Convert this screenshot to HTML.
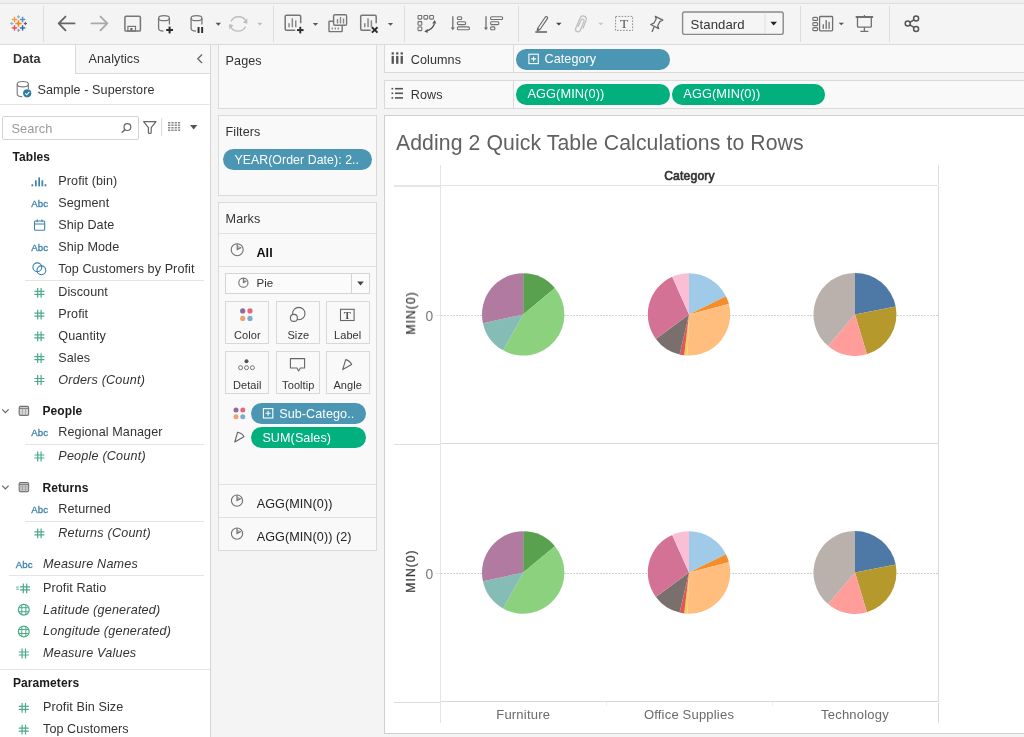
<!DOCTYPE html><html><head><meta charset="utf-8"><style>html,body{margin:0;padding:0;}body{width:1024px;height:737px;position:relative;overflow:hidden;background:#f4f4f4;-webkit-font-smoothing:antialiased;font-family:"Liberation Sans", sans-serif;}#root{position:absolute;left:0;top:0;width:1024px;height:737px;overflow:hidden;will-change:transform;}</style></head><body><div id="root">
<div style="position:absolute;left:0px;top:0px;width:1024px;height:3px;background:#efeef1;"></div>
<div style="position:absolute;left:0px;top:3px;width:1024px;height:1px;background:#dedede;"></div>
<div style="position:absolute;left:0px;top:4px;width:1024px;height:40px;background:#f4f4f4;"></div>
<div style="position:absolute;left:0px;top:44px;width:1024px;height:1px;background:#dcdcdc;"></div>
<div style="position:absolute;left:43px;top:6px;width:1px;height:36px;background:#dcdcdc;"></div>
<div style="position:absolute;left:273px;top:6px;width:1px;height:36px;background:#dcdcdc;"></div>
<div style="position:absolute;left:404px;top:6px;width:1px;height:36px;background:#dcdcdc;"></div>
<div style="position:absolute;left:517.5px;top:6px;width:1px;height:36px;background:#dcdcdc;"></div>
<div style="position:absolute;left:799.5px;top:6px;width:1px;height:36px;background:#dcdcdc;"></div>
<div style="position:absolute;left:888.5px;top:6px;width:1px;height:36px;background:#dcdcdc;"></div>
<div style="position:absolute;left:0px;top:45px;width:210px;height:692px;background:#ffffff;"></div>
<div style="position:absolute;left:210px;top:45px;width:1px;height:692px;background:#d6d6d6;"></div>
<div style="position:absolute;left:75px;top:45px;width:135px;height:29px;background:#f8f8f8;border-left:1px solid #d9d9d9;border-bottom:1px solid #d9d9d9;box-sizing:border-box;"></div>
<div style="position:absolute;top:53.03px;font-size:12.6px;line-height:12.6px;color:#333;font-weight:bold;white-space:nowrap;letter-spacing:0.08px;left:13px;">Data</div>
<div style="position:absolute;top:53.03px;font-size:12.6px;line-height:12.6px;color:#333;font-weight:normal;white-space:nowrap;letter-spacing:0.08px;left:88.5px;">Analytics</div>
<div style="position:absolute;top:83.53px;font-size:12.6px;line-height:12.6px;color:#333;font-weight:normal;white-space:nowrap;letter-spacing:0.08px;left:37.5px;">Sample - Superstore</div>
<div style="position:absolute;left:0px;top:104px;width:210px;height:1px;background:#e4e4e4;"></div>
<div style="position:absolute;left:2px;top:116px;width:137px;height:24px;background:#fff;border:1px solid #d4d4d4;border-radius:2px;box-sizing:border-box;"></div>
<div style="position:absolute;top:122.86px;font-size:12.8px;line-height:12.8px;color:#9a9a9a;font-weight:normal;white-space:nowrap;letter-spacing:0.08px;left:11.5px;">Search</div>
<div style="position:absolute;top:151.24px;font-size:12px;line-height:12px;color:#1a1a1a;font-weight:bold;white-space:nowrap;letter-spacing:0.08px;left:12.5px;">Tables</div>
<div style="position:absolute;top:175.43px;font-size:12.6px;line-height:12.6px;color:#333;font-weight:normal;white-space:nowrap;letter-spacing:0.08px;left:58.3px;">Profit (bin)</div>
<div style="position:absolute;top:197.23px;font-size:12.6px;line-height:12.6px;color:#333;font-weight:normal;white-space:nowrap;letter-spacing:0.08px;left:58.3px;">Segment</div>
<div style="position:absolute;top:219.03px;font-size:12.6px;line-height:12.6px;color:#333;font-weight:normal;white-space:nowrap;letter-spacing:0.08px;left:58.3px;">Ship Date</div>
<div style="position:absolute;top:240.83px;font-size:12.6px;line-height:12.6px;color:#333;font-weight:normal;white-space:nowrap;letter-spacing:0.08px;left:58.3px;">Ship Mode</div>
<div style="position:absolute;top:262.63px;font-size:12.6px;line-height:12.6px;color:#333;font-weight:normal;white-space:nowrap;letter-spacing:0.08px;left:58.3px;">Top Customers by Profit</div>
<div style="position:absolute;top:286.43px;font-size:12.6px;line-height:12.6px;color:#333;font-weight:normal;white-space:nowrap;letter-spacing:0.08px;left:58.3px;">Discount</div>
<div style="position:absolute;top:308.23px;font-size:12.6px;line-height:12.6px;color:#333;font-weight:normal;white-space:nowrap;letter-spacing:0.08px;left:58.3px;">Profit</div>
<div style="position:absolute;top:330.03px;font-size:12.6px;line-height:12.6px;color:#333;font-weight:normal;white-space:nowrap;letter-spacing:0.08px;left:58.3px;">Quantity</div>
<div style="position:absolute;top:351.83px;font-size:12.6px;line-height:12.6px;color:#333;font-weight:normal;white-space:nowrap;letter-spacing:0.08px;left:58.3px;">Sales</div>
<div style="position:absolute;top:373.63px;font-size:12.6px;line-height:12.6px;color:#333;font-weight:normal;white-space:nowrap;font-style:italic;letter-spacing:0.2px;left:58.3px;">Orders (Count)</div>
<div style="position:absolute;left:25px;top:280px;width:179px;height:1px;background:#e4e4e4;"></div>
<div style="position:absolute;top:405.44px;font-size:12px;line-height:12px;color:#1a1a1a;font-weight:bold;white-space:nowrap;letter-spacing:0.08px;left:42.5px;">People</div>
<div style="position:absolute;top:426.33px;font-size:12.6px;line-height:12.6px;color:#333;font-weight:normal;white-space:nowrap;letter-spacing:0.08px;left:58.3px;">Regional Manager</div>
<div style="position:absolute;left:25px;top:444px;width:179px;height:1px;background:#e4e4e4;"></div>
<div style="position:absolute;top:450.13px;font-size:12.6px;line-height:12.6px;color:#333;font-weight:normal;white-space:nowrap;font-style:italic;letter-spacing:0.2px;left:58.3px;">People (Count)</div>
<div style="position:absolute;top:481.84px;font-size:12px;line-height:12px;color:#1a1a1a;font-weight:bold;white-space:nowrap;letter-spacing:0.08px;left:42.5px;">Returns</div>
<div style="position:absolute;top:503.03px;font-size:12.6px;line-height:12.6px;color:#333;font-weight:normal;white-space:nowrap;letter-spacing:0.08px;left:58.3px;">Returned</div>
<div style="position:absolute;left:25px;top:520.5px;width:179px;height:1px;background:#e4e4e4;"></div>
<div style="position:absolute;top:526.93px;font-size:12.6px;line-height:12.6px;color:#333;font-weight:normal;white-space:nowrap;font-style:italic;letter-spacing:0.2px;left:58.3px;">Returns (Count)</div>
<div style="position:absolute;top:557.83px;font-size:12.6px;line-height:12.6px;color:#333;font-weight:normal;white-space:nowrap;font-style:italic;letter-spacing:0.2px;left:43px;">Measure Names</div>
<div style="position:absolute;left:9px;top:575px;width:195px;height:1px;background:#e4e4e4;"></div>
<div style="position:absolute;top:581.93px;font-size:12.6px;line-height:12.6px;color:#333;font-weight:normal;white-space:nowrap;letter-spacing:0.08px;left:43px;">Profit Ratio</div>
<div style="position:absolute;top:603.53px;font-size:12.6px;line-height:12.6px;color:#333;font-weight:normal;white-space:nowrap;font-style:italic;letter-spacing:0.2px;left:43px;">Latitude (generated)</div>
<div style="position:absolute;top:625.33px;font-size:12.6px;line-height:12.6px;color:#333;font-weight:normal;white-space:nowrap;font-style:italic;letter-spacing:0.2px;left:43px;">Longitude (generated)</div>
<div style="position:absolute;top:647.13px;font-size:12.6px;line-height:12.6px;color:#333;font-weight:normal;white-space:nowrap;font-style:italic;letter-spacing:0.2px;left:43px;">Measure Values</div>
<div style="position:absolute;left:0px;top:669px;width:210px;height:1px;background:#e4e4e4;"></div>
<div style="position:absolute;top:676.84px;font-size:12px;line-height:12px;color:#1a1a1a;font-weight:bold;white-space:nowrap;letter-spacing:0.08px;left:13px;">Parameters</div>
<div style="position:absolute;top:701.43px;font-size:12.6px;line-height:12.6px;color:#333;font-weight:normal;white-space:nowrap;letter-spacing:0.08px;left:43px;">Profit Bin Size</div>
<div style="position:absolute;top:723.23px;font-size:12.6px;line-height:12.6px;color:#333;font-weight:normal;white-space:nowrap;letter-spacing:0.08px;left:43px;">Top Customers</div>
<div style="position:absolute;left:218px;top:44px;width:159px;height:64.5px;background:#f9f9f9;border:1px solid #dadada;box-sizing:border-box;"></div>
<div style="position:absolute;top:55.33px;font-size:12.6px;line-height:12.6px;color:#333;font-weight:normal;white-space:nowrap;letter-spacing:0.08px;left:225.6px;">Pages</div>
<div style="position:absolute;left:218px;top:115px;width:159px;height:80.5px;background:#f9f9f9;border:1px solid #dadada;box-sizing:border-box;"></div>
<div style="position:absolute;top:125.83px;font-size:12.6px;line-height:12.6px;color:#333;font-weight:normal;white-space:nowrap;letter-spacing:0.08px;left:225.6px;">Filters</div>
<div style="position:absolute;left:223px;top:149px;width:149px;height:21px;background:#4a96b3;border-radius:10.5px;"></div>
<div style="position:absolute;top:153.79px;font-size:12.3px;line-height:12.3px;color:#fff;font-weight:normal;white-space:nowrap;letter-spacing:0.08px;left:234.4px;">YEAR(Order Date): 2..</div>
<div style="position:absolute;left:218px;top:202px;width:159px;height:349px;background:#f9f9f9;border:1px solid #dadada;box-sizing:border-box;"></div>
<div style="position:absolute;top:212.83px;font-size:12.6px;line-height:12.6px;color:#333;font-weight:normal;white-space:nowrap;letter-spacing:0.08px;left:225.6px;">Marks</div>
<div style="position:absolute;left:219px;top:233px;width:157px;height:1px;background:#e0e0e0;"></div>
<div style="position:absolute;top:247.03px;font-size:12.6px;line-height:12.6px;color:#111;font-weight:bold;white-space:nowrap;letter-spacing:0.08px;left:256.4px;">All</div>
<div style="position:absolute;left:219px;top:266px;width:157px;height:1px;background:#e0e0e0;"></div>
<div style="position:absolute;left:225px;top:273px;width:145px;height:21px;background:#fbfbfb;border:1px solid #d4d4d4;box-sizing:border-box;"></div>
<div style="position:absolute;left:350.5px;top:274px;width:1px;height:19px;background:#d4d4d4;"></div>
<div style="position:absolute;top:277.77px;font-size:11.5px;line-height:11.5px;color:#333;font-weight:normal;white-space:nowrap;letter-spacing:0.08px;left:256.4px;">Pie</div>
<div style="position:absolute;left:225.3px;top:301px;width:44px;height:43px;background:#f9f9f9;border:1px solid #d8d8d8;box-sizing:border-box;"></div>
<div style="position:absolute;top:330.29px;font-size:11px;line-height:11px;color:#333;font-weight:normal;white-space:nowrap;letter-spacing:0.08px;left:47.30000000000001px;width:400px;text-align:center;">Color</div>
<div style="position:absolute;left:276.3px;top:301px;width:44px;height:43px;background:#f9f9f9;border:1px solid #d8d8d8;box-sizing:border-box;"></div>
<div style="position:absolute;top:330.29px;font-size:11px;line-height:11px;color:#333;font-weight:normal;white-space:nowrap;letter-spacing:0.08px;left:98.30000000000001px;width:400px;text-align:center;">Size</div>
<div style="position:absolute;left:325.7px;top:301px;width:44px;height:43px;background:#f9f9f9;border:1px solid #d8d8d8;box-sizing:border-box;"></div>
<div style="position:absolute;top:330.29px;font-size:11px;line-height:11px;color:#333;font-weight:normal;white-space:nowrap;letter-spacing:0.08px;left:147.7px;width:400px;text-align:center;">Label</div>
<div style="position:absolute;left:225.3px;top:350.5px;width:44px;height:43px;background:#f9f9f9;border:1px solid #d8d8d8;box-sizing:border-box;"></div>
<div style="position:absolute;top:379.89px;font-size:11px;line-height:11px;color:#333;font-weight:normal;white-space:nowrap;letter-spacing:0.08px;left:47.30000000000001px;width:400px;text-align:center;">Detail</div>
<div style="position:absolute;left:276.3px;top:350.5px;width:44px;height:43px;background:#f9f9f9;border:1px solid #d8d8d8;box-sizing:border-box;"></div>
<div style="position:absolute;top:379.89px;font-size:11px;line-height:11px;color:#333;font-weight:normal;white-space:nowrap;letter-spacing:0.08px;left:98.30000000000001px;width:400px;text-align:center;">Tooltip</div>
<div style="position:absolute;left:325.7px;top:350.5px;width:44px;height:43px;background:#f9f9f9;border:1px solid #d8d8d8;box-sizing:border-box;"></div>
<div style="position:absolute;top:379.89px;font-size:11px;line-height:11px;color:#333;font-weight:normal;white-space:nowrap;letter-spacing:0.08px;left:147.7px;width:400px;text-align:center;">Angle</div>
<div style="position:absolute;left:251px;top:403px;width:115px;height:21px;background:#4a96b3;border-radius:10.5px;"></div>
<div style="position:absolute;top:407.83px;font-size:12.6px;line-height:12.6px;color:#fff;font-weight:normal;white-space:nowrap;letter-spacing:0.08px;left:279.2px;">Sub-Catego..</div>
<div style="position:absolute;left:251px;top:427px;width:115px;height:21px;background:#02b07e;border-radius:10.5px;"></div>
<div style="position:absolute;top:431.53px;font-size:12.6px;line-height:12.6px;color:#fff;font-weight:normal;white-space:nowrap;letter-spacing:0.08px;left:262.4px;">SUM(Sales)</div>
<div style="position:absolute;left:219px;top:484px;width:157px;height:1px;background:#e0e0e0;"></div>
<div style="position:absolute;top:498.03px;font-size:12.6px;line-height:12.6px;color:#222;font-weight:normal;white-space:nowrap;letter-spacing:0.08px;left:256.7px;">AGG(MIN(0))</div>
<div style="position:absolute;left:219px;top:517px;width:157px;height:1px;background:#e0e0e0;"></div>
<div style="position:absolute;top:531.23px;font-size:12.6px;line-height:12.6px;color:#222;font-weight:normal;white-space:nowrap;letter-spacing:0.08px;left:256.7px;">AGG(MIN(0)) (2)</div>
<div style="position:absolute;left:384px;top:44px;width:640px;height:29.3px;background:#f9f9f9;border-top:1px solid #dadada;border-bottom:1px solid #dadada;border-left:1px solid #dadada;box-sizing:border-box;"></div>
<div style="position:absolute;left:512.5px;top:45px;width:1px;height:27.3px;background:#dadada;"></div>
<div style="position:absolute;top:53.83px;font-size:12.6px;line-height:12.6px;color:#333;font-weight:normal;white-space:nowrap;letter-spacing:0.08px;left:410.8px;">Columns</div>
<div style="position:absolute;left:384px;top:80px;width:640px;height:29.2px;background:#f9f9f9;border-top:1px solid #dadada;border-bottom:1px solid #dadada;border-left:1px solid #dadada;box-sizing:border-box;"></div>
<div style="position:absolute;left:512.5px;top:81px;width:1px;height:27.2px;background:#dadada;"></div>
<div style="position:absolute;top:88.53px;font-size:12.6px;line-height:12.6px;color:#333;font-weight:normal;white-space:nowrap;letter-spacing:0.08px;left:410.8px;">Rows</div>
<div style="position:absolute;left:516px;top:49px;width:153.5px;height:20.5px;background:#4a96b3;border-radius:10.25px;"></div>
<div style="position:absolute;top:52.63px;font-size:12.6px;line-height:12.6px;color:#fff;font-weight:normal;white-space:nowrap;letter-spacing:0.08px;left:544.5px;">Category</div>
<div style="position:absolute;left:516px;top:84.2px;width:153.5px;height:20.5px;background:#02b07e;border-radius:10.25px;"></div>
<div style="position:absolute;top:87.86px;font-size:12.8px;line-height:12.8px;color:#fff;font-weight:normal;white-space:nowrap;letter-spacing:0.08px;left:527.4px;">AGG(MIN(0))</div>
<div style="position:absolute;left:672px;top:84.2px;width:153px;height:20.5px;background:#02b07e;border-radius:10.25px;"></div>
<div style="position:absolute;top:87.86px;font-size:12.8px;line-height:12.8px;color:#fff;font-weight:normal;white-space:nowrap;letter-spacing:0.08px;left:683.3px;">AGG(MIN(0))</div>
<div style="position:absolute;left:384px;top:115px;width:640px;height:619px;background:#ffffff;border-left:1.5px solid #cfcfcf;border-top:1.5px solid #cfcfcf;border-bottom:1.5px solid #cfcfcf;box-sizing:border-box;"></div>
<div style="position:absolute;top:132.05px;font-size:21.2px;line-height:21.2px;color:#606060;font-weight:normal;white-space:nowrap;letter-spacing:0.08px;left:396px;letter-spacing:0.1px;">Adding 2 Quick Table Calculations to Rows</div>
<div style="position:absolute;left:440px;top:165px;width:1px;height:558px;background:#e4e4e4;"></div>
<div style="position:absolute;left:394px;top:185px;width:46px;height:2px;background:#e6e6e6;"></div>
<div style="position:absolute;left:441px;top:185px;width:497px;height:1px;background:#e4e4e4;"></div>
<div style="position:absolute;left:938px;top:165px;width:1px;height:20px;background:#dcdcdc;"></div>
<div style="position:absolute;left:937.6px;top:186px;width:1px;height:516px;background:#dadada;"></div>
<div style="position:absolute;left:938px;top:703px;width:1px;height:20px;background:#d8d8d8;"></div>
<div style="position:absolute;left:394px;top:444px;width:46px;height:1px;background:#dedede;"></div>
<div style="position:absolute;left:441px;top:443px;width:497px;height:1px;background:#dadada;"></div>
<div style="position:absolute;left:394px;top:702px;width:46px;height:1px;background:#dedede;"></div>
<div style="position:absolute;left:441px;top:701px;width:497px;height:1px;background:#d8d8d8;"></div>
<div style="position:absolute;left:606px;top:702px;width:1px;height:4px;background:#ececec;"></div>
<div style="position:absolute;left:772px;top:702px;width:1px;height:4px;background:#ececec;"></div>
<div style="position:absolute;top:170.37px;font-size:12.2px;line-height:12.2px;color:#333;font-weight:normal;white-space:nowrap;letter-spacing:0.08px;left:489.5px;width:400px;text-align:center;-webkit-text-stroke:0.6px #2e2e2e;letter-spacing:0.15px;">Category</div>
<div style="position:absolute;top:708.10px;font-size:13px;line-height:13px;color:#6a6a6a;font-weight:normal;white-space:nowrap;letter-spacing:0.08px;left:323.20000000000005px;width:400px;text-align:center;letter-spacing:0.2px;">Furniture</div>
<div style="position:absolute;top:708.10px;font-size:13px;line-height:13px;color:#6a6a6a;font-weight:normal;white-space:nowrap;letter-spacing:0.08px;left:489px;width:400px;text-align:center;letter-spacing:0.2px;">Office Supplies</div>
<div style="position:absolute;top:708.10px;font-size:13px;line-height:13px;color:#6a6a6a;font-weight:normal;white-space:nowrap;letter-spacing:0.08px;left:655px;width:400px;text-align:center;letter-spacing:0.2px;">Technology</div>
<div style="position:absolute;left:441px;top:315px;width:497px;height:1px;background:repeating-linear-gradient(to right,#d0d0d0 0,#d0d0d0 2px,transparent 2px,transparent 3px);"></div>
<div style="position:absolute;left:435px;top:315px;width:5px;height:1px;background:#ececec;"></div>
<div style="position:absolute;top:309.62px;font-size:13.8px;line-height:13.8px;color:#7a7a7a;font-weight:normal;white-space:nowrap;letter-spacing:0.08px;left:229.5px;width:400px;text-align:center;">0</div>
<div style="position:absolute;left:410.8px;top:313.1px;transform:translate(-50%,-50%) rotate(-90deg);font-size:12.2px;line-height:12px;color:#3a3a3a;font-weight:normal;-webkit-text-stroke:0.25px #3a3a3a;letter-spacing:1px;white-space:nowrap;">MIN(0)</div>
<div style="position:absolute;left:441px;top:573px;width:497px;height:1px;background:repeating-linear-gradient(to right,#d0d0d0 0,#d0d0d0 2px,transparent 2px,transparent 3px);"></div>
<div style="position:absolute;left:435px;top:573px;width:5px;height:1px;background:#ececec;"></div>
<div style="position:absolute;top:567.62px;font-size:13.8px;line-height:13.8px;color:#7a7a7a;font-weight:normal;white-space:nowrap;letter-spacing:0.08px;left:229.5px;width:400px;text-align:center;">0</div>
<div style="position:absolute;left:410.8px;top:571.1px;transform:translate(-50%,-50%) rotate(-90deg);font-size:12.2px;line-height:12px;color:#3a3a3a;font-weight:normal;-webkit-text-stroke:0.25px #3a3a3a;letter-spacing:1px;white-space:nowrap;">MIN(0)</div>
<svg style="position:absolute;left:0px;top:0px;pointer-events:none;" width="1024" height="737" viewBox="0 0 1024 737"><path d="M523.20,314.40 L523.20,273.20 A41.2,41.2 0 0 1 554.90,288.08 Z" fill="#59a14f"/><path d="M523.20,314.40 L554.90,288.08 A41.2,41.2 0 0 1 503.10,350.36 Z" fill="#8cd17d"/><path d="M523.20,314.40 L503.10,350.36 A41.2,41.2 0 0 1 482.95,323.18 Z" fill="#86bcb6"/><path d="M523.20,314.40 L482.95,323.18 A41.2,41.2 0 0 1 523.20,273.20 Z" fill="#b07aa1"/><path d="M689.00,314.40 L689.00,273.20 A41.2,41.2 0 0 1 725.94,296.15 Z" fill="#a0cbe8"/><path d="M689.00,314.40 L725.94,296.15 A41.2,41.2 0 0 1 728.89,304.08 Z" fill="#f28e2b"/><path d="M689.00,314.40 L728.89,304.08 A41.2,41.2 0 0 1 687.56,355.57 Z" fill="#ffbe7d"/><path d="M689.00,314.40 L687.56,355.57 A41.2,41.2 0 0 1 684.19,355.32 Z" fill="#f1ce63"/><path d="M689.00,314.40 L684.19,355.32 A41.2,41.2 0 0 1 679.59,354.51 Z" fill="#e15759"/><path d="M689.00,314.40 L679.59,354.51 A41.2,41.2 0 0 1 655.88,338.91 Z" fill="#79706e"/><path d="M689.00,314.40 L655.88,338.91 A41.2,41.2 0 0 1 672.18,276.79 Z" fill="#d37295"/><path d="M689.00,314.40 L672.18,276.79 A41.2,41.2 0 0 1 689.00,273.20 Z" fill="#fabfd2"/><path d="M855.00,314.40 L855.00,272.90 A41.5,41.5 0 0 1 895.72,306.41 Z" fill="#4e79a7"/><path d="M855.00,314.40 L895.72,306.41 A41.5,41.5 0 0 1 866.93,354.15 Z" fill="#b6992d"/><path d="M855.00,314.40 L866.93,354.15 A41.5,41.5 0 0 1 828.05,345.96 Z" fill="#ff9d9a"/><path d="M855.00,314.40 L828.05,345.96 A41.5,41.5 0 0 1 855.00,272.90 Z" fill="#bab0ac"/><path d="M523.20,572.50 L523.20,531.30 A41.2,41.2 0 0 1 554.90,546.18 Z" fill="#59a14f"/><path d="M523.20,572.50 L554.90,546.18 A41.2,41.2 0 0 1 503.10,608.46 Z" fill="#8cd17d"/><path d="M523.20,572.50 L503.10,608.46 A41.2,41.2 0 0 1 482.95,581.28 Z" fill="#86bcb6"/><path d="M523.20,572.50 L482.95,581.28 A41.2,41.2 0 0 1 523.20,531.30 Z" fill="#b07aa1"/><path d="M689.00,572.50 L689.00,531.30 A41.2,41.2 0 0 1 725.94,554.25 Z" fill="#a0cbe8"/><path d="M689.00,572.50 L725.94,554.25 A41.2,41.2 0 0 1 728.89,562.18 Z" fill="#f28e2b"/><path d="M689.00,572.50 L728.89,562.18 A41.2,41.2 0 0 1 687.56,613.67 Z" fill="#ffbe7d"/><path d="M689.00,572.50 L687.56,613.67 A41.2,41.2 0 0 1 684.19,613.42 Z" fill="#f1ce63"/><path d="M689.00,572.50 L684.19,613.42 A41.2,41.2 0 0 1 679.59,612.61 Z" fill="#e15759"/><path d="M689.00,572.50 L679.59,612.61 A41.2,41.2 0 0 1 655.88,597.01 Z" fill="#79706e"/><path d="M689.00,572.50 L655.88,597.01 A41.2,41.2 0 0 1 672.18,534.89 Z" fill="#d37295"/><path d="M689.00,572.50 L672.18,534.89 A41.2,41.2 0 0 1 689.00,531.30 Z" fill="#fabfd2"/><path d="M855.00,572.50 L855.00,531.00 A41.5,41.5 0 0 1 895.72,564.51 Z" fill="#4e79a7"/><path d="M855.00,572.50 L895.72,564.51 A41.5,41.5 0 0 1 866.93,612.25 Z" fill="#b6992d"/><path d="M855.00,572.50 L866.93,612.25 A41.5,41.5 0 0 1 828.05,604.06 Z" fill="#ff9d9a"/><path d="M855.00,572.50 L828.05,604.06 A41.5,41.5 0 0 1 855.00,531.00 Z" fill="#bab0ac"/></svg>
<svg style="position:absolute;left:0px;top:0px;pointer-events:none;" width="1024" height="45" viewBox="0 0 1024 45"><rect x="15.3" y="22.65" width="6.4" height="1.7" fill="#f18b23"/><rect x="17.65" y="20.3" width="1.7" height="6.4" fill="#f18b23"/><rect x="11.8" y="18.8" width="5.4" height="1.4" fill="#f39b37"/><rect x="13.8" y="16.8" width="1.4" height="5.4" fill="#f39b37"/><rect x="19.900000000000002" y="18.8" width="5.4" height="1.4" fill="#5b8db5"/><rect x="21.900000000000002" y="16.8" width="1.4" height="5.4" fill="#5b8db5"/><rect x="11.8" y="27.2" width="5.4" height="1.4" fill="#e24b60"/><rect x="13.8" y="25.2" width="1.4" height="5.4" fill="#e24b60"/><rect x="19.900000000000002" y="27.2" width="5.4" height="1.4" fill="#2f6c9c"/><rect x="21.900000000000002" y="25.2" width="1.4" height="5.4" fill="#2f6c9c"/><rect x="16.9" y="16.25" width="3.2" height="1.1" fill="#7fb0d3"/><rect x="17.95" y="15.200000000000001" width="1.1" height="3.2" fill="#7fb0d3"/><rect x="10.200000000000001" y="22.95" width="3.2" height="1.1" fill="#86b3d2"/><rect x="11.25" y="21.9" width="1.1" height="3.2" fill="#86b3d2"/><rect x="23.799999999999997" y="22.95" width="3.2" height="1.1" fill="#5d5a91"/><rect x="24.849999999999998" y="21.9" width="1.1" height="3.2" fill="#5d5a91"/><rect x="16.9" y="29.75" width="3.2" height="1.1" fill="#8fa3b8"/><rect x="17.95" y="28.7" width="1.1" height="3.2" fill="#8fa3b8"/><path d="M74.5,23.4 H59 M65.5,16.6 L58.7,23.4 L65.5,30.3" stroke="#666" stroke-width="1.9" fill="none" stroke-linecap="round" stroke-linejoin="round"/><path d="M91.5,23.4 H107 M100.5,16.6 L107.3,23.4 L100.5,30.3" stroke="#aaa" stroke-width="1.9" fill="none" stroke-linecap="round" stroke-linejoin="round"/><rect x="124.9" y="16.3" width="15.5" height="14.8" rx="1.2" stroke="#767676" stroke-width="1.5" fill="none"/><rect x="127.9" y="26.4" width="7.6" height="4.7" stroke="#767676" stroke-width="1.2" fill="none"/><rect x="130.3" y="28" width="2.2" height="2.2" fill="#666"/><ellipse cx="164" cy="18.2" rx="5.4" ry="2.5" stroke="#777" stroke-width="1.3" fill="none"/><path d="M158.6,18.2 V28.6 Q158.6,31 163.5,31.2 M169.4,18.2 V24.5" stroke="#777" stroke-width="1.3" fill="none"/><rect x="166.2" y="29.0" width="6.8" height="2.0" fill="#2b2b2b"/><rect x="168.6" y="26.6" width="2.0" height="6.8" fill="#2b2b2b"/><ellipse cx="196.5" cy="18.2" rx="5.4" ry="2.5" stroke="#777" stroke-width="1.3" fill="none"/><path d="M191.1,18.2 V28.6 Q191.1,31 196.0,31.2 M201.9,18.2 V24.5" stroke="#777" stroke-width="1.3" fill="none"/><rect x="197.6" y="27" width="1.9" height="6" fill="#2b2b2b"/><rect x="201.2" y="27" width="1.9" height="6" fill="#2b2b2b"/><polygon points="215.6,22.8 221,22.8 218.3,25.8" fill="#555"/><path d="M246.2,21.5 A8.2,7.6 0 0 0 231,21.5 M230.2,25.8 A8.2,7.6 0 0 0 245.6,26.5" stroke="#bdbdbd" stroke-width="1.3" fill="none"/><polygon points="247.3,18.5 247.3,23.8 242.8,22.6" fill="#bdbdbd"/><polygon points="229.1,29.2 229.2,23.9 233.6,25.2" fill="#bdbdbd"/><polygon points="257.3,22.8 262.3,22.8 259.8,25.6" fill="#bbb"/><path d="M300.7,23.2 V16.4 Q300.7,15.2 299.5,15.2 H286.4 Q285.2,15.2 285.2,16.4 V29.0 Q285.2,30.2 286.4,30.2 H295.2" stroke="#767676" stroke-width="1.5" fill="none"/><rect x="288.3" y="23.2" width="1.5" height="4" fill="#888"/><rect x="291.6" y="18.3" width="1.5" height="8.9" fill="#888"/><rect x="295" y="20.4" width="1.5" height="6.8" fill="#888"/><rect x="297.0" y="29.150000000000002" width="6.6" height="1.9" fill="#2b2b2b"/><rect x="299.35" y="26.8" width="1.9" height="6.6" fill="#2b2b2b"/><polygon points="312.8,23 318.1,23 315.45000000000005,25.8" fill="#555"/><rect x="333.6" y="14.8" width="13" height="10.5" rx="1.2" stroke="#767676" stroke-width="1.4" fill="#f4f4f4"/><rect x="336.8" y="19" width="1.4" height="4.5" fill="#888"/><rect x="339.8" y="17" width="1.4" height="6.5" fill="#888"/><rect x="342.8" y="18.5" width="1.4" height="5" fill="#888"/><path d="M333.6,21.3 H329.4 Q329,21.3 329,21.7 V31.2 Q329,31.6 329.4,31.6 H341.8 Q342.2,31.6 342.2,31.2 V25.5" stroke="#767676" stroke-width="1.4" fill="none"/><rect x="331.6" y="27.5" width="1.3" height="2" fill="#888"/><rect x="334.6" y="27.5" width="1.3" height="2" fill="#888"/><rect x="337.6" y="27.5" width="1.3" height="2" fill="#888"/><path d="M376.2,23.2 V16.4 Q376.2,15.2 375.0,15.2 H361.9 Q360.7,15.2 360.7,16.4 V29.0 Q360.7,30.2 361.9,30.2 H370.7" stroke="#767676" stroke-width="1.5" fill="none"/><rect x="364" y="23.2" width="1.5" height="4" fill="#888"/><rect x="367.3" y="18.3" width="1.5" height="8.9" fill="#888"/><rect x="370.6" y="20.4" width="1.5" height="6.8" fill="#888"/><path d="M371.9,27.2 L377.5,32.6 M377.5,27.2 L371.9,32.6" stroke="#2b2b2b" stroke-width="1.9"/><polygon points="387.9,23 393.1,23 390.5,25.8" fill="#555"/><rect x="418" y="15.5" width="3.8" height="3.6" rx="0.8" stroke="#707070" stroke-width="1.1" fill="none"/><rect x="423.9" y="15.5" width="3.8" height="3.6" rx="0.8" stroke="#707070" stroke-width="1.1" fill="none"/><rect x="429.7" y="15.5" width="3.8" height="3.6" rx="0.8" stroke="#707070" stroke-width="1.1" fill="none"/><rect x="418" y="21.6" width="3.8" height="3.6" rx="0.8" stroke="#707070" stroke-width="1.1" fill="none"/><rect x="418" y="27" width="3.8" height="3.6" rx="0.8" stroke="#707070" stroke-width="1.1" fill="none"/><path d="M426.2,31 Q432.5,29.5 434.5,23.5" stroke="#555" stroke-width="1.3" fill="none"/><polygon points="432.2,23.6 436.3,23.6 434.8,20" fill="#555"/><polygon points="424.3,31.4 427.5,29 427.7,33" fill="#555"/><path d="M452.8,16.3 V28.5" stroke="#707070" stroke-width="1.3"/><polygon points="450.7,27.6 454.9,27.6 452.8,30.3" fill="#707070"/><rect x="457.4" y="16.7" width="4.3" height="2.8" rx="1" stroke="#707070" stroke-width="1.1" fill="none"/><rect x="457.4" y="21.8" width="8.2" height="2.8" rx="1" stroke="#707070" stroke-width="1.1" fill="none"/><rect x="457.4" y="26.9" width="12" height="2.8" rx="1" stroke="#707070" stroke-width="1.1" fill="none"/><path d="M486,16.3 V28.5" stroke="#707070" stroke-width="1.3"/><polygon points="483.9,27.6 488.1,27.6 486,30.3" fill="#707070"/><rect x="490.6" y="16.7" width="12" height="2.8" rx="1" stroke="#707070" stroke-width="1.1" fill="none"/><rect x="490.6" y="21.8" width="8.2" height="2.8" rx="1" stroke="#707070" stroke-width="1.1" fill="none"/><rect x="490.6" y="26.9" width="4.3" height="2.8" rx="1" stroke="#707070" stroke-width="1.1" fill="none"/><path d="M537.5,28.5 L545.2,17.2 Q546,16.2 546.9,16.8 L547.3,17.1 Q548,17.7 547.4,18.6 L539.8,29.8 L537.2,30.6 Z M537.6,28.6 L539.8,29.8" stroke="#666" stroke-width="1.1" fill="none" stroke-linejoin="round"/><rect x="535.3" y="31.2" width="11.7" height="1.6" fill="#666"/><polygon points="556,22.7 561.6,22.7 558.8,25.6" fill="#444"/><path d="M583,28.3 L586.3,19.6 A3.25,3.25 0 0 0 580.1,17.9 L575.7,28.4 A2.45,2.45 0 0 0 580.3,30.2 L584.1,21.1 A1.65,1.65 0 0 0 581,20.1 L578.2,26.6" stroke="#bdbdbd" stroke-width="1.2" fill="none" stroke-linecap="round"/><polygon points="598,22.7 603.4,22.7 600.7,25.3" fill="#c8c8c8"/><rect x="615.6" y="16.4" width="17" height="14" stroke="#8a8a8a" stroke-width="1" stroke-dasharray="1.6,1.4" fill="none"/><text x="624.1" y="28.2" font-family="Liberation Serif" font-size="13.5" fill="#555" text-anchor="middle">T</text><path d="M655.3,16.4 L662.8,20.1 L660,21.4 L657.7,25.7 L658.7,28.6 L650.7,24.5 L653.8,23.2 L656.2,19 Z" stroke="#666" stroke-width="1.25" fill="none" stroke-linejoin="round"/><path d="M653.8,27.4 L652.2,31.4" stroke="#666" stroke-width="1.3" stroke-linecap="round"/><rect x="682.6" y="12" width="100.6" height="22.4" rx="1.8" stroke="#8a8a8a" stroke-width="1.4" fill="#f5f5f5"/><rect x="764.6" y="12.8" width="0.8" height="21" fill="#dadada"/><polygon points="770.4,21.8 777,21.8 773.7,25.5" fill="#222"/><rect x="812.8" y="17.4" width="4.8" height="3" rx="1" stroke="#707070" stroke-width="1.1" fill="none"/><rect x="812.8" y="22.6" width="4.8" height="3" rx="1" stroke="#707070" stroke-width="1.1" fill="none"/><rect x="812.8" y="27.6" width="4.8" height="3" rx="1" stroke="#707070" stroke-width="1.1" fill="none"/><rect x="819.6" y="16.5" width="13" height="14.3" rx="0.8" stroke="#707070" stroke-width="1.3" fill="none"/><rect x="822.6" y="24.3" width="1.4" height="4.6" fill="#777"/><rect x="825.5" y="20" width="1.4" height="8.9" fill="#777"/><rect x="828.4" y="21.8" width="1.4" height="7.1" fill="#777"/><polygon points="838.6,22.7 844,22.7 841.3,25.3" fill="#555"/><rect x="855.7" y="16" width="17.4" height="2" fill="#707070"/><rect x="863.8" y="15" width="1.2" height="1.5" fill="#707070"/><path d="M857.5,18 V26.4 Q857.5,27.2 858.3,27.2 H870.5 Q871.3,27.2 871.3,26.4 V18" stroke="#707070" stroke-width="1.3" fill="none"/><path d="M864.4,27.2 V31.2 M860.4,31.3 H868.4" stroke="#707070" stroke-width="1.3"/><circle cx="916.1" cy="18.5" r="2.5" stroke="#555" stroke-width="1.5" fill="none"/><circle cx="907.7" cy="23.6" r="2.5" stroke="#555" stroke-width="1.5" fill="none"/><circle cx="916.1" cy="28.9" r="2.5" stroke="#555" stroke-width="1.5" fill="none"/><path d="M909.9,22.3 L913.9,19.9 M909.9,24.9 L913.9,27.4" stroke="#555" stroke-width="1.5"/></svg>
<div style="position:absolute;top:17.73px;font-size:13.2px;line-height:13.2px;color:#333;font-weight:normal;white-space:nowrap;letter-spacing:0.08px;left:690.6px;">Standard</div>
<svg style="position:absolute;left:0px;top:0px;pointer-events:none;" width="1024" height="737" viewBox="0 0 1024 737"><path d="M202,54.5 L197.8,58.8 L202,63" stroke="#666" stroke-width="1.3" fill="none"/><ellipse cx="22.8" cy="84.2" rx="5.6" ry="2.7" stroke="#777" stroke-width="1.1" fill="#fff"/><path d="M17.2,84.2 V94.2 Q17.2,96.3 22.2,96.6 M28.4,84.2 V89" stroke="#777" stroke-width="1.1" fill="none"/><circle cx="27.2" cy="93.3" r="4.1" fill="#2f7ca3"/><path d="M25.2,93.4 L26.7,94.8 L29.4,91.8" stroke="#fff" stroke-width="1.1" fill="none"/><circle cx="127.4" cy="127.1" r="3.4" stroke="#666" stroke-width="1.2" fill="none"/><path d="M125,129.6 L121.8,132.7" stroke="#666" stroke-width="1.4"/><path d="M143.6,121.6 H156 L151.2,127.6 V132.6 Q151.2,133.4 150.4,133.4 H149.2 Q148.4,133.4 148.4,132.6 V127.6 Z" stroke="#666" stroke-width="1.2" fill="none" stroke-linejoin="round"/><rect x="161.2" y="118.3" width="1" height="18" fill="#d8d8d8"/><rect x="168" y="122" width="2.3" height="1.5" fill="#8a8a8a"/><rect x="168" y="124.5" width="2.3" height="1.5" fill="#8a8a8a"/><rect x="168" y="127" width="2.3" height="1.5" fill="#8a8a8a"/><rect x="168" y="129.5" width="2.3" height="1.5" fill="#8a8a8a"/><rect x="171.3" y="122" width="2.3" height="1.5" fill="#8a8a8a"/><rect x="171.3" y="124.5" width="2.3" height="1.5" fill="#8a8a8a"/><rect x="171.3" y="127" width="2.3" height="1.5" fill="#8a8a8a"/><rect x="171.3" y="129.5" width="2.3" height="1.5" fill="#8a8a8a"/><rect x="174.6" y="122" width="2.3" height="1.5" fill="#8a8a8a"/><rect x="174.6" y="124.5" width="2.3" height="1.5" fill="#8a8a8a"/><rect x="174.6" y="127" width="2.3" height="1.5" fill="#8a8a8a"/><rect x="174.6" y="129.5" width="2.3" height="1.5" fill="#8a8a8a"/><rect x="177.9" y="122" width="2.3" height="1.5" fill="#8a8a8a"/><rect x="177.9" y="124.5" width="2.3" height="1.5" fill="#8a8a8a"/><rect x="177.9" y="127" width="2.3" height="1.5" fill="#8a8a8a"/><rect x="177.9" y="129.5" width="2.3" height="1.5" fill="#8a8a8a"/><polygon points="190,125.1 197.4,125.1 193.7,129.4" fill="#555"/><rect x="31.499999999999996" y="184.2" width="1.7" height="2.1000000000000227" fill="#3c82ab"/><rect x="35.0" y="180.3" width="1.7" height="6.0" fill="#3c82ab"/><rect x="38.300000000000004" y="177.4" width="1.7" height="8.900000000000006" fill="#3c82ab"/><rect x="41.5" y="180.3" width="1.7" height="6.0" fill="#3c82ab"/><rect x="44.6" y="184.2" width="1.7" height="2.1000000000000227" fill="#3c82ab"/><text x="31.3" y="207.2" font-family="Liberation Sans" font-size="9.7" fill="#3c82ab" stroke="#3c82ab" stroke-width="0.3">Abc</text><rect x="34.5" y="221" width="10.2" height="9.3" rx="1" stroke="#3c82ab" stroke-width="1.1" fill="none"/><path d="M34.5,224 H44.7 M37.2,219.6 V222.2 M42,219.6 V222.2" stroke="#3c82ab" stroke-width="1.1"/><text x="31.3" y="250.8" font-family="Liberation Sans" font-size="9.7" fill="#3c82ab" stroke="#3c82ab" stroke-width="0.3">Abc</text><circle cx="37.3" cy="267.3" r="4.4" stroke="#3c82ab" stroke-width="1.1" fill="none"/><circle cx="41.4" cy="270.3" r="4.4" stroke="#3c82ab" stroke-width="1.1" fill="none"/><path d="M37.699999999999996,287.9 V297.69999999999993 M41.1,287.9 V297.69999999999993 M34.4,291.29999999999995 H44.4 M34.4,294.29999999999995 H44.4" stroke="#4bab86" stroke-width="1.2" fill="none"/><path d="M37.699999999999996,309.7 V319.49999999999994 M41.1,309.7 V319.49999999999994 M34.4,313.09999999999997 H44.4 M34.4,316.09999999999997 H44.4" stroke="#4bab86" stroke-width="1.2" fill="none"/><path d="M37.699999999999996,331.5 V341.29999999999995 M41.1,331.5 V341.29999999999995 M34.4,334.9 H44.4 M34.4,337.9 H44.4" stroke="#4bab86" stroke-width="1.2" fill="none"/><path d="M37.699999999999996,353.3 V363.09999999999997 M41.1,353.3 V363.09999999999997 M34.4,356.7 H44.4 M34.4,359.7 H44.4" stroke="#4bab86" stroke-width="1.2" fill="none"/><path d="M37.699999999999996,375.1 V384.9 M41.1,375.1 V384.9 M34.4,378.5 H44.4 M34.4,381.5 H44.4" stroke="#4bab86" stroke-width="1.2" fill="none"/><path d="M2.2,409.3 L5.4,412.6 L8.6,409.3" stroke="#666" stroke-width="1.2" fill="none"/><rect x="19.2" y="406.4" width="9.4" height="9" rx="1.3" stroke="#707070" stroke-width="1.15" fill="#d8d8d8"/><path d="M19.2,408.4 H28.6" stroke="#777" stroke-width="1"/><path d="M22.4,408.4 V415.4 M25.5,408.4 V415.4" stroke="#999" stroke-width="0.8"/><text x="31.3" y="436.3" font-family="Liberation Sans" font-size="9.7" fill="#3c82ab" stroke="#3c82ab" stroke-width="0.3">Abc</text><path d="M37.699999999999996,451.6 V461.4 M41.1,451.6 V461.4 M34.4,455.0 H44.4 M34.4,458.0 H44.4" stroke="#4bab86" stroke-width="1.2" fill="none"/><path d="M2.2,485.7 L5.4,489.0 L8.6,485.7" stroke="#666" stroke-width="1.2" fill="none"/><rect x="19.2" y="482.6" width="9.4" height="9" rx="1.3" stroke="#707070" stroke-width="1.15" fill="#d8d8d8"/><path d="M19.2,484.6 H28.6" stroke="#777" stroke-width="1"/><path d="M22.4,484.6 V491.6 M25.5,484.6 V491.6" stroke="#999" stroke-width="0.8"/><path d="M19.2,486.90000000000003 H28.6 M19.2,489.20000000000005 H28.6" stroke="#999" stroke-width="0.8"/><text x="31.3" y="513" font-family="Liberation Sans" font-size="9.7" fill="#3c82ab" stroke="#3c82ab" stroke-width="0.3">Abc</text><path d="M37.699999999999996,528.4 V538.1999999999999 M41.1,528.4 V538.1999999999999 M34.4,531.8 H44.4 M34.4,534.8 H44.4" stroke="#4bab86" stroke-width="1.2" fill="none"/><text x="15.8" y="567.8" font-family="Liberation Sans" font-size="9.7" fill="#3c82ab" stroke="#3c82ab" stroke-width="0.3">Abc</text><path d="M16.3,587.1 H18.8 M16.3,589.2 H18.8" stroke="#4bab86" stroke-width="1"/><path d="M23.3,583.4 V593.1999999999999 M26.7,583.4 V593.1999999999999 M20,586.8 H30 M20,589.8 H30" stroke="#4bab86" stroke-width="1.2" fill="none"/><circle cx="23.8" cy="609.7" r="5.4" stroke="#4bab86" stroke-width="1.2" fill="none"/><path d="M21.8,604.7 V614.7 M25.8,604.7 V614.7 M18.8,607.7 H28.8 M18.8,611.7 H28.8" stroke="#4bab86" stroke-width="1"/><circle cx="23.8" cy="631.5" r="5.4" stroke="#4bab86" stroke-width="1.2" fill="none"/><path d="M21.8,626.5 V636.5 M25.8,626.5 V636.5 M18.8,629.5 H28.8 M18.8,633.5 H28.8" stroke="#4bab86" stroke-width="1"/><path d="M22.1,648.6 V658.4 M25.5,648.6 V658.4 M18.8,652.0 H28.8 M18.8,655.0 H28.8" stroke="#4bab86" stroke-width="1.2" fill="none"/><path d="M22.1,702.9 V712.6999999999999 M25.5,702.9 V712.6999999999999 M18.8,706.3 H28.8 M18.8,709.3 H28.8" stroke="#4bab86" stroke-width="1.2" fill="none"/><path d="M22.1,724.7 V734.5 M25.5,724.7 V734.5 M18.8,728.1 H28.8 M18.8,731.1 H28.8" stroke="#4bab86" stroke-width="1.2" fill="none"/></svg>
<svg style="position:absolute;left:0px;top:0px;pointer-events:none;" width="1024" height="737" viewBox="0 0 1024 737"><circle cx="237.2" cy="249.7" r="6" stroke="#707070" stroke-width="1.1" fill="none"/><path d="M237.2,243.7 V249.7 L241.33,247.50" stroke="#707070" stroke-width="1.1" fill="none"/><path d="M237.2,245.01999999999998 V249.7 L241.33,247.50 Z" fill="#707070" opacity="0.45"/><circle cx="243.4" cy="282.7" r="4.6" stroke="#707070" stroke-width="1.1" fill="none"/><path d="M243.4,278.09999999999997 V282.7 L246.57,281.02" stroke="#707070" stroke-width="1.1" fill="none"/><path d="M243.4,279.11199999999997 V282.7 L246.57,281.02 Z" fill="#707070" opacity="0.45"/><polygon points="357.2,281.6 363.8,281.6 360.5,285.6" fill="#444"/><circle cx="242.7" cy="310.9" r="2.6" fill="#8e6c9d"/><circle cx="250" cy="310.9" r="2.6" fill="#e8667b"/><circle cx="242.7" cy="318.4" r="2.6" fill="#efa26f"/><circle cx="250" cy="318.4" r="2.6" fill="#7eabcb"/><circle cx="298.8" cy="313.6" r="6.2" stroke="#666" stroke-width="1.1" fill="#f9f9f9"/><circle cx="293.9" cy="317.9" r="3.5" stroke="#666" stroke-width="1.1" fill="#f9f9f9"/><rect x="340.5" y="309.3" width="13.6" height="11.2" stroke="#666" stroke-width="1.1" fill="none"/><text x="347.3" y="318.6" font-family="Liberation Serif" font-size="10.5" font-weight="bold" fill="#555" text-anchor="middle">T</text><circle cx="246.5" cy="361.3" r="2" fill="#555"/><circle cx="240.6" cy="367.7" r="2" stroke="#666" stroke-width="0.9" fill="none"/><circle cx="246.5" cy="367.7" r="2" stroke="#666" stroke-width="0.9" fill="none"/><circle cx="252.4" cy="367.7" r="2" stroke="#666" stroke-width="0.9" fill="none"/><path d="M290.4,358.6 H304.6 V368 H300.4 L298.6,371 L297,368 H290.4 Z" stroke="#666" stroke-width="1.1" fill="none" stroke-linejoin="round"/><path d="M342.7,369.6 L345.7,359.6 Q350.3,360.9 351.6,364.4 Z" stroke="#666" stroke-width="1.15" fill="none" stroke-linejoin="round"/><circle cx="236" cy="410.1" r="2.5" fill="#8e6c9d"/><circle cx="242.8" cy="410.1" r="2.5" fill="#e8667b"/><circle cx="236" cy="416.8" r="2.5" fill="#efa26f"/><circle cx="242.8" cy="416.8" r="2.5" fill="#7eabcb"/><path d="M234.8,442 L237.6,432.2 Q242.5,433.3 243.9,436.8 Z" stroke="#666" stroke-width="1.15" fill="none" stroke-linejoin="round"/><rect x="263.4" y="408.6" width="9.4" height="9.4" stroke="#fff" stroke-width="1.1" fill="none"/><path d="M265.59999999999997,413.3 H270.59999999999997 M268.09999999999997,410.8 V415.8" stroke="#fff" stroke-width="1.1"/><rect x="528.9" y="54.2" width="9.4" height="9.4" stroke="#fff" stroke-width="1.1" fill="none"/><path d="M531.1,58.900000000000006 H536.0999999999999 M533.6,56.400000000000006 V61.4" stroke="#fff" stroke-width="1.1"/><circle cx="237" cy="500.6" r="5.6" stroke="#707070" stroke-width="1.1" fill="none"/><path d="M237,495.0 V500.6 L240.86,498.55" stroke="#707070" stroke-width="1.1" fill="none"/><path d="M237,496.232 V500.6 L240.86,498.55 Z" fill="#707070" opacity="0.45"/><circle cx="237" cy="533.6" r="5.6" stroke="#707070" stroke-width="1.1" fill="none"/><path d="M237,528.0 V533.6 L240.86,531.55" stroke="#707070" stroke-width="1.1" fill="none"/><path d="M237,529.232 V533.6 L240.86,531.55 Z" fill="#707070" opacity="0.45"/><rect x="391.6" y="52.3" width="2.3" height="2.2" fill="#555"/><rect x="391.6" y="55.9" width="2.3" height="7.9" fill="#555"/><rect x="396.1" y="52.3" width="2.3" height="2.2" fill="#555"/><rect x="396.1" y="55.9" width="2.3" height="7.9" fill="#555"/><rect x="400.6" y="52.3" width="2.3" height="2.2" fill="#555"/><rect x="400.6" y="55.9" width="2.3" height="7.9" fill="#555"/><rect x="391.5" y="87.9" width="1.7" height="1.6" fill="#555"/><rect x="395" y="87.9" width="8" height="1.6" fill="#555"/><rect x="391.5" y="92.5" width="1.7" height="1.6" fill="#555"/><rect x="395" y="92.5" width="8" height="1.6" fill="#555"/><rect x="391.5" y="97.10000000000001" width="1.7" height="1.6" fill="#555"/><rect x="395" y="97.10000000000001" width="8" height="1.6" fill="#555"/></svg>
</div></body></html>
